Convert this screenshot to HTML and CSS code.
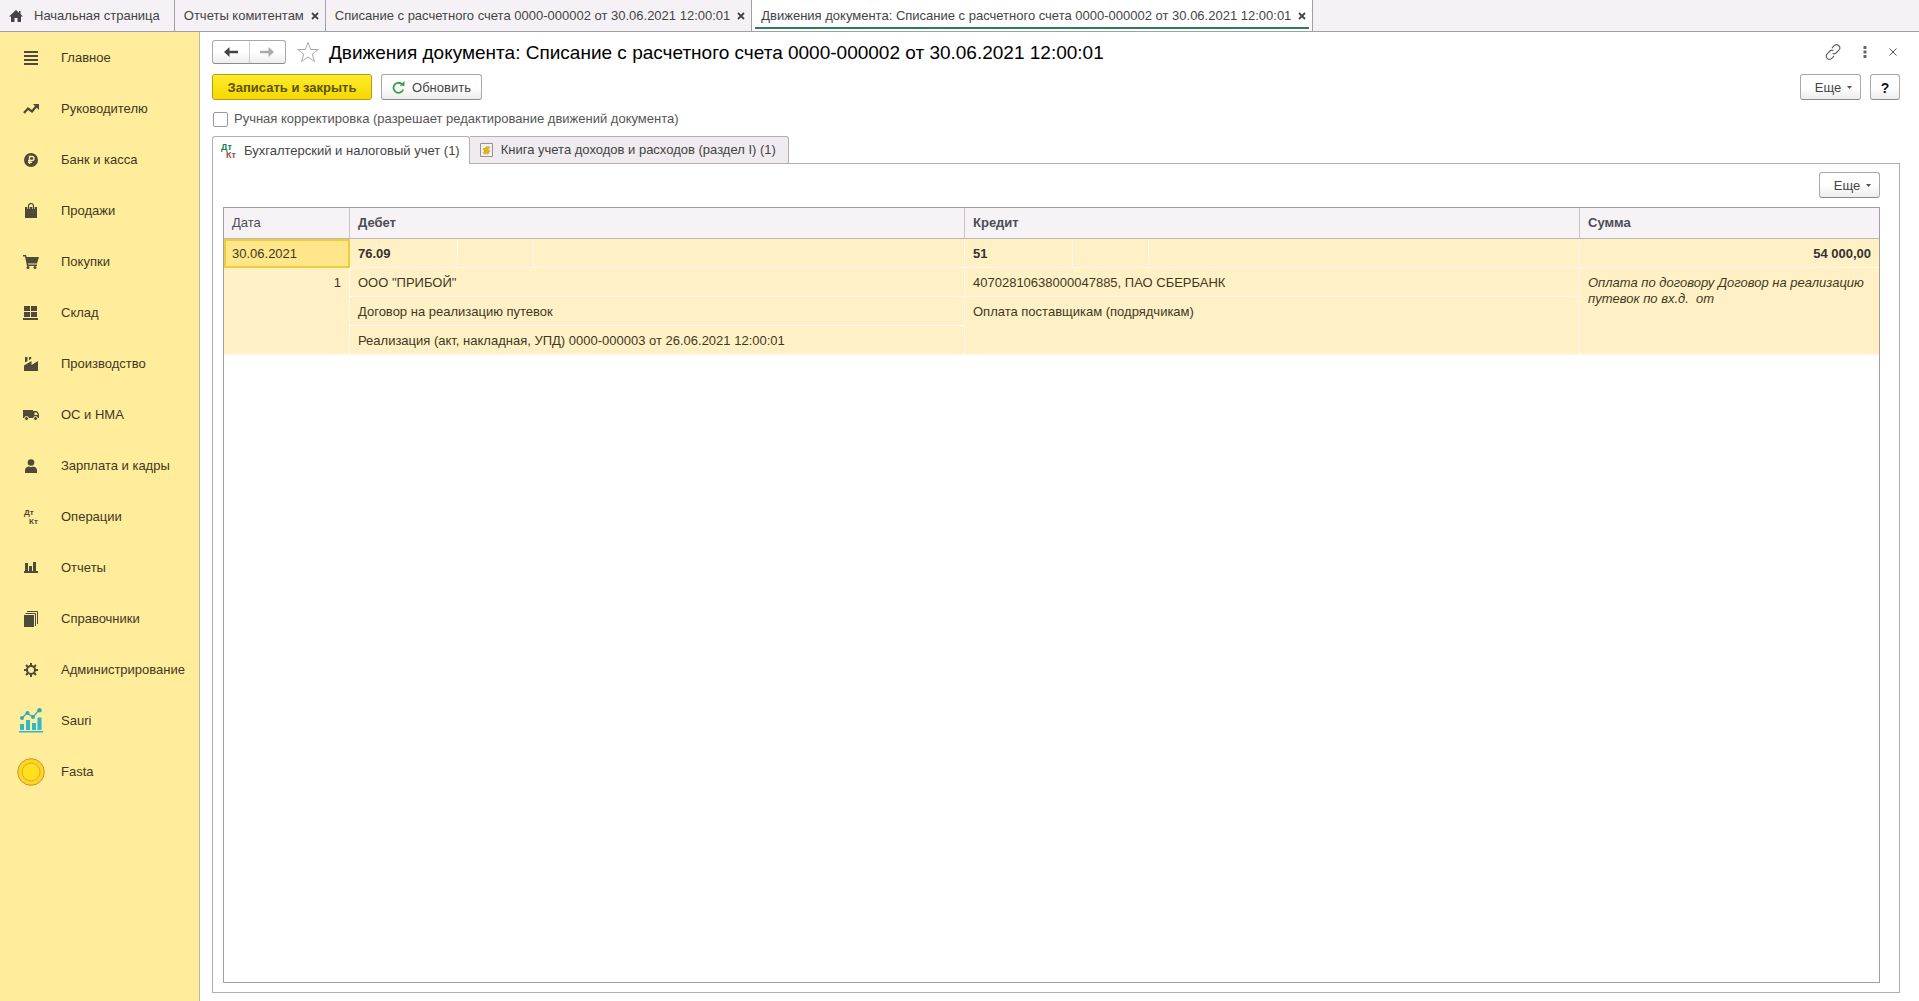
FILE: index.html
```html
<!DOCTYPE html>
<html lang="ru">
<head>
<meta charset="utf-8">
<title>Движения документа</title>
<link rel="stylesheet" href="styles.css">
</head>
<body>
<nav class="windows" aria-label="Открытые окна">
  <a class="window" href="#"><svg class="home" width="14" height="12" viewBox="0 0 14 12"><path d="M7 0L0 6.500h2V12h3.500V8h3v4H12V6.500h2L11.500 4.100V1H10v1.700z" fill="#444"/></svg>Начальная страница</a>
  <div class="window"><a href="#">Отчеты комитентам</a><button class="close" aria-label="Закрыть"><svg width="8" height="8" viewBox="0 0 8 8"><path d="M1 1l6 6M7 1L1 7" stroke="#444" stroke-width="1.800"/></svg></button></div>
  <div class="window"><a href="#">Списание с расчетного счета 0000-000002 от 30.06.2021 12:00:01</a><button class="close" aria-label="Закрыть"><svg width="8" height="8" viewBox="0 0 8 8"><path d="M1 1l6 6M7 1L1 7" stroke="#444" stroke-width="1.800"/></svg></button></div>
  <div class="window window-current"><a href="#">Движения документа: Списание с расчетного счета 0000-000002 от 30.06.2021 12:00:01</a><button class="close" aria-label="Закрыть"><svg width="8" height="8" viewBox="0 0 8 8"><path d="M1 1l6 6M7 1L1 7" stroke="#444" stroke-width="1.800"/></svg></button></div>
</nav>
<div class="workspace">
  <nav class="sections" aria-label="Разделы">
    <a class="section" href="#"><span class="icon"><svg width="14" height="14" viewBox="0 0 14 14"><path d="M0 1h14M0 5h14M0 9h14M0 13h14" stroke="#4d4a3a" stroke-width="2"/></svg></span>Главное</a>
    <a class="section" href="#"><span class="icon"><svg width="16" height="10" viewBox="0 0 16 10"><path d="M1 9l4-4.500 4 3L13.500 2" fill="none" stroke="#4d4a3a" stroke-width="2.200"/><path d="M10 0h6v6z" fill="#4d4a3a"/></svg></span>Руководителю</a>
    <a class="section" href="#"><span class="icon"><svg width="14" height="14" viewBox="0 0 14 14"><circle cx="7" cy="7" r="7" fill="#4d4a3a"/><path d="M5.500 11V3.500H8a2 2 0 0 1 0 4H4M4 9.300h4" fill="none" stroke="#ffed9c" stroke-width="1.300"/></svg></span>Банк и касса</a>
    <a class="section" href="#"><span class="icon"><svg width="12" height="15" viewBox="0 0 12 15"><path d="M0 4h12v11H0z" fill="#4d4a3a"/><path d="M3.500 6V3a2.500 2.500 0 0 1 5 0v3" fill="none" stroke="#ffed9c" stroke-width="2.400"/><path d="M3.500 6V3a2.500 2.500 0 0 1 5 0v3" fill="none" stroke="#4d4a3a" stroke-width="1.200"/></svg></span>Продажи</a>
    <a class="section" href="#"><span class="icon"><svg width="16" height="14" viewBox="0 0 16 14"><path d="M0 0h3l.6 2H16l-2 6.500H5l.3 1H14V11H4L2 1.500H0z" fill="#4d4a3a"/><circle cx="5" cy="12.500" r="1.500" fill="#4d4a3a"/><circle cx="12" cy="12.500" r="1.500" fill="#4d4a3a"/></svg></span>Покупки</a>
    <a class="section" href="#"><span class="icon"><svg width="15" height="14" viewBox="0 0 15 14"><path d="M1 0h6v5H1zM8 0h6v5H8zM1 6h6v5H1zM8 6h6v5H8zM0 12h15v2H0z" fill="#4d4a3a"/></svg></span>Склад</a>
    <a class="section" href="#"><span class="icon"><svg width="14" height="14" viewBox="0 0 14 14"><path d="M0 14V8.500L7.500 4v4L14 4v10zM1 0h2.500v4L1 5.500zM5 0h2.500L6.800 2 5 3.200z" fill="#4d4a3a"/></svg></span>Производство</a>
    <a class="section" href="#"><span class="icon"><svg width="16" height="12" viewBox="0 0 16 12"><path d="M0 1h10v8H0zM10 2h4l2 3v4h-6z" fill="#4d4a3a"/><path d="M11.500 3.500h2L15 6h-3.500z" fill="#ffed9c"/><circle cx="3.500" cy="9.500" r="2" fill="#4d4a3a" stroke="#ffed9c"/><circle cx="12.500" cy="9.500" r="2" fill="#4d4a3a" stroke="#ffed9c"/></svg></span>ОС и НМА</a>
    <a class="section" href="#"><span class="icon"><svg width="12" height="14" viewBox="0 0 12 14"><circle cx="6" cy="3.500" r="3.300" fill="#4d4a3a"/><path d="M0 14v-2.500Q0 8 4 7.500q2 1.200 4 0 4 .5 4 4V14z" fill="#4d4a3a"/></svg></span>Зарплата и кадры</a>
    <a class="section" href="#"><span class="icon"><svg class="ledger" width="14" height="16" viewBox="0 0 14 16"><text x="0" y="6">Дт</text><text x="5" y="15">Кт</text></svg></span>Операции</a>
    <a class="section" href="#"><span class="icon"><svg width="14" height="11" viewBox="0 0 14 11"><path d="M1 1h3v8h1V4h3v5h1V0h3v9h2v2H0V9h1z" fill="#4d4a3a"/></svg></span>Отчеты</a>
    <a class="section" href="#"><span class="icon"><svg width="14" height="16" viewBox="0 0 14 16"><path d="M0 4h10v12H0z" fill="#4d4a3a"/><path d="M1.500 2.500h10V15M3 .5h10.500V13" fill="none" stroke="#4d4a3a"/></svg></span>Справочники</a>
    <a class="section" href="#"><span class="icon"><svg width="14" height="14" viewBox="0 0 14 14"><circle cx="7" cy="7" r="4" fill="none" stroke="#4d4a3a" stroke-width="2"/><path d="M7 0v3M7 11v3M0 7h3M11 7h3M2 2l2 2M10 10l2 2M12 2l-2 2M4 10l-2 2" stroke="#4d4a3a" stroke-width="2"/></svg></span>Администрирование</a>
    <a class="section" href="#"><span class="icon"><svg width="24" height="25" viewBox="0 0 24 25"><path d="M1 16h4v6H1zM7 12h4v10H7zM13 15h4v7h-4zM18.500 9.500h4V22h-4zM0 23h24v1.500H0z" fill="#31b6cd"/><path d="M3 10l5-5 6 4 6-7" fill="none" stroke="#45b4bd" stroke-width="1.500"/><g fill="#31a9bd"><circle cx="3" cy="10" r="2"/><circle cx="8.500" cy="5" r="2"/><circle cx="14" cy="9" r="2"/><circle cx="20.500" cy="2.200" r="2.200"/></g></svg></span>Sauri</a>
    <a class="section" href="#"><span class="icon"><svg width="28" height="28" viewBox="0 0 28 28"><circle cx="14" cy="14" r="13.300" fill="#fdd42b" stroke="#c79a1c"/><circle cx="14" cy="14" r="9" fill="#ffe01c" stroke="#e0ad1c"/></svg></span>Fasta</a>
  </nav>
  <main class="form">
    <header class="heading">
      <div class="history">
        <button aria-label="Назад"><svg width="14" height="10" viewBox="0 0 14 10"><path d="M0 5l5.500-5v3.700H14v2.600H5.500V10z" fill="#444"/></svg></button>
        <button aria-label="Вперед"><svg width="14" height="10" viewBox="0 0 14 10"><path d="M14 5L8.500 0v3.700H0v2.600h8.500V10z" fill="#aaa"/></svg></button>
      </div>
      <button class="plain star" aria-label="В избранное"><svg width="24" height="22" viewBox="0 0 24 22"><path d="M12 1.500l2.700 7h7.600l-6.100 4.600 2.300 7.400-6.500-4.500-6.500 4.500 2.300-7.400L1.700 8.500h7.600z" fill="#fff" stroke="#a9a9a9"/></svg></button>
      <h1>Движения документа: Списание с расчетного счета 0000-000002 от 30.06.2021 12:00:01</h1>
      <div class="tools">
        <button class="plain" aria-label="Ссылка"><svg width="16" height="16" viewBox="0 0 16 16"><path d="M7 4l2.300-2.300a3 3 0 0 1 4.500 4.500L11 9a3 3 0 0 1-3.500.5M9 12l-2.300 2.300a3 3 0 0 1-4.500-4.500L5 7a3 3 0 0 1 3.500-.5" fill="none" stroke="#666" stroke-width="1.200"/></svg></button>
        <button class="plain" aria-label="Меню"><svg width="4" height="12" viewBox="0 0 4 12"><path d="M.5 0h3v3h-3zM.5 4.500h3v3h-3zM.5 9h3v3h-3z" fill="#666"/></svg></button>
        <button class="plain" aria-label="Закрыть"><svg width="8" height="8" viewBox="0 0 8 8"><path d="M.5.5l7 7M7.500.5l-7 7" stroke="#555"/></svg></button>
      </div>
    </header>
    <div class="commands">
      <button class="button primary">Записать и закрыть</button>
      <button class="button refresh"><svg width="13" height="13" viewBox="0 0 13 13"><path d="M9.800 3A5 5 0 1 0 11.200 8.500" fill="none" stroke="#3a9f45" stroke-width="1.800"/><path d="M7.500 4.800H12.500V0z" fill="#3a9f45"/></svg>Обновить</button>
      <button class="button more">Еще<svg width="5" height="3" viewBox="0 0 5 3"><path d="M0 0h5L2.500 3z" fill="#555"/></svg></button>
      <button class="button help">?</button>
    </div>
    <label class="manual"><input type="checkbox">Ручная корректировка (разрешает редактирование движений документа)</label>
    <div class="tabs" role="tablist">
      <button class="tab tab-current" role="tab" aria-selected="true"><svg class="ledger ledger-color" width="16" height="16" viewBox="0 0 16 16"><text x="0" y="7">Дт</text><text x="5" y="15">Кт</text></svg>Бухгалтерский и налоговый учет (1)</button>
      <button class="tab" role="tab" aria-selected="false"><svg width="13" height="14" viewBox="0 0 13 14"><path d="M.5.5h12v13H.5z" fill="#f3f3ee" stroke="#8d9396"/><g fill="#f2c624" stroke="#b98a16" stroke-width=".5"><ellipse cx="6" cy="9.800" rx="3" ry="1.200"/><ellipse cx="7" cy="7.900" rx="3" ry="1.200"/><ellipse cx="5.500" cy="6.200" rx="2.500" ry="1.100"/><ellipse cx="7.800" cy="4.600" rx="2.200" ry="1"/></g></svg>Книга учета доходов и расходов (раздел I) (1)</button>
    </div>
    <section class="panel" role="tabpanel">
      <div class="panel-commands"><button class="button more">Еще<svg width="5" height="3" viewBox="0 0 5 3"><path d="M0 0h5L2.500 3z" fill="#555"/></svg></button></div>
      <div class="list">
        <table>
          <colgroup><col class="col-date"><col class="col-account"><col class="col-unit"><col><col class="col-account"><col class="col-unit"><col><col class="col-sum"></colgroup>
          <thead>
            <tr><th class="light" scope="col">Дата</th><th colspan="3" scope="col">Дебет</th><th colspan="3" scope="col">Кредит</th><th scope="col">Сумма</th></tr>
          </thead>
          <tbody>
            <tr><td class="selected">30.06.2021</td><td class="strong">76.09</td><td></td><td></td><td class="strong">51</td><td></td><td></td><td class="strong number">54 000,00</td></tr>
            <tr><td class="number" rowspan="3">1</td><td colspan="3">ООО "ПРИБОЙ"</td><td colspan="3">40702810638000047885, ПАО СБЕРБАНК</td><td class="note" rowspan="3">Оплата по договору Договор на реализацию путевок по вх.д.&nbsp; от</td></tr>
            <tr><td colspan="3">Договор на реализацию путевок</td><td colspan="3" rowspan="2">Оплата поставщикам (подрядчикам)</td></tr>
            <tr><td colspan="3">Реализация (акт, накладная, УПД) 0000-000003 от 26.06.2021 12:00:01</td></tr>
          </tbody>
        </table>
      </div>
    </section>
  </main>
</div>
</body>
</html>
```
FILE: styles.css
```css
* { box-sizing: border-box; }

body {
  margin: 0;
  min-height: 100vh;
  display: flex;
  flex-direction: column;
  background: #fff;
  color: #444;
  font: 13px/16px "Liberation Sans", Arial, sans-serif;
}

a { color: inherit; text-decoration: none; }
button, input { font: inherit; color: inherit; margin: 0; }
button { padding: 0; cursor: pointer; }
svg { display: block; flex: none; }

/* Open windows bar */
.windows {
  display: flex;
  height: 32px;
  background: #f6f1f6;
  border-bottom: 1px solid #a0a0a4;
}
.window {
  display: flex;
  align-items: center;
  gap: 7px;
  padding: 0 6px 0 9px;
  border-right: 1px solid #a0a0a4;
  white-space: nowrap;
}
.home { margin-right: 4px; }
.window:first-child { padding-right: 14px; }
.window-current {
  background: #fff linear-gradient(#2f7d5b, #2f7d5b) 50% 27px / calc(100% - 6px) 2px no-repeat;
}
.close, .plain { border: 0; background: none; }

/* Sections */
.workspace { flex: 1; display: flex; }
.sections {
  flex: none;
  width: 200px;
  background: #ffed9c;
  border-right: 1px solid #b5b5a8;
}
.section {
  display: flex;
  align-items: center;
  height: 51px;
  color: #40391f;
}
.icon {
  width: 61px;
  display: flex;
  justify-content: center;
}
.ledger { overflow: visible; font-size: 8px; font-weight: bold; fill: #4d4a3a; }
.ledger-color { font-size: 9px; fill: #16805a; }
.ledger-color text + text { fill: #9a4a4a; }

/* Form */
.form {
  flex: 1;
  min-width: 0;
  display: flex;
  flex-direction: column;
  padding: 8px 19px 8px 12px;
}
.heading { display: flex; align-items: center; height: 24px; }
.history {
  display: flex;
  width: 74px;
  height: 24px;
  border: 1px solid #a8a8a8;
  border-bottom-color: #8c8c8c;
  border-radius: 3px;
  background: linear-gradient(#fff 50%, #ededed);
}
.history button {
  flex: 1;
  display: grid;
  place-items: center;
  border: 0;
  background: none;
}
.history button + button { border-left: 1px solid #ccc; }
.star { margin: 0 9px 0 10px; }
h1 {
  margin: 0;
  padding-top: 2px;
  font-size: 19px;
  line-height: 24px;
  font-weight: normal;
  color: #000;
}
.tools { display: flex; align-items: center; gap: 22px; margin-left: auto; padding-right: 3px; }

.commands { display: flex; gap: 9px; margin-top: 10px; }
.button {
  display: flex;
  align-items: center;
  justify-content: center;
  height: 26px;
  padding-top: 1px;
  border: 1px solid #a8a8a8;
  border-bottom-color: #8c8c8c;
  border-radius: 3px;
  background: linear-gradient(#fff 50%, #ededed);
}
.primary {
  width: 160px;
  border-color: #b39b12;
  background: linear-gradient(#ffec2e, #f5d800);
  color: #5c5200;
  font-weight: bold;
}
.refresh { width: 101px; gap: 7px; }
.more { width: 61px; gap: 6px; padding-left: 6px; }
.commands .more { margin-left: auto; }
.help { width: 30px; font-size: 14px; font-weight: bold; color: #111; }

.manual {
  display: flex;
  align-items: center;
  gap: 6px;
  height: 16px;
  margin-top: 11px;
  padding-left: 1px;
  color: #555;
}
.manual input {
  appearance: none;
  width: 15px;
  height: 15px;
  border: 1px solid #999;
  border-radius: 2px;
  background: #fff;
}

.tabs { display: flex; margin-top: 9px; }
.tab {
  display: flex;
  align-items: center;
  gap: 8px;
  height: 27px;
  padding: 0 12px 0 10px;
  border: 1px solid #b0b0b0;
  border-width: 1px 1px 0 0;
  border-radius: 0 3px 0 0;
  background: #efebef;
}
.tab-current {
  height: 28px;
  margin-bottom: -1px;
  padding: 0 9px 0 8px;
  gap: 7px;
  border-left-width: 1px;
  border-radius: 3px 3px 0 0;
  background: #fff;
  z-index: 1;
}

.panel {
  flex: 1;
  display: flex;
  flex-direction: column;
  padding: 8px 19px 9px 10px;
  border: 1px solid #b0b0b0;
}
.panel-commands { display: flex; justify-content: flex-end; margin-bottom: 9px; }
.list { flex: 1; border: 1px solid #a0a0a0; }

table {
  width: 100%;
  table-layout: fixed;
  border-collapse: separate;
  border-spacing: 0;
}
.col-date { width: 126px; }
.col-account { width: 108px; }
.col-unit { width: 76px; }
.col-sum { width: 299px; }
th {
  height: 31px;
  padding: 0 8px;
  background: #f6f2f6;
  border-right: 1px solid #c8c4c8;
  border-bottom: 1px solid #b8b8b8;
  color: #4d4d55;
  text-align: left;
}
.light { font-weight: normal; }
td {
  height: 29px;
  padding: 7px 8px 5px;
  background: #fff1c5;
  border-right: 1px solid #fffaea;
  border-bottom: 1px solid #fffaea;
  color: #40391f;
  vertical-align: top;
}
th:last-child, tr > .note, tr > .strong.number { border-right: 0; }
.strong { font-weight: bold; color: #333; }
.number { text-align: right; }
.note { font-style: italic; }
.selected {
  padding: 5px 6px 4px;
  border: 2px solid #f0cb3c;
  background: #ffe68a;
}
```
